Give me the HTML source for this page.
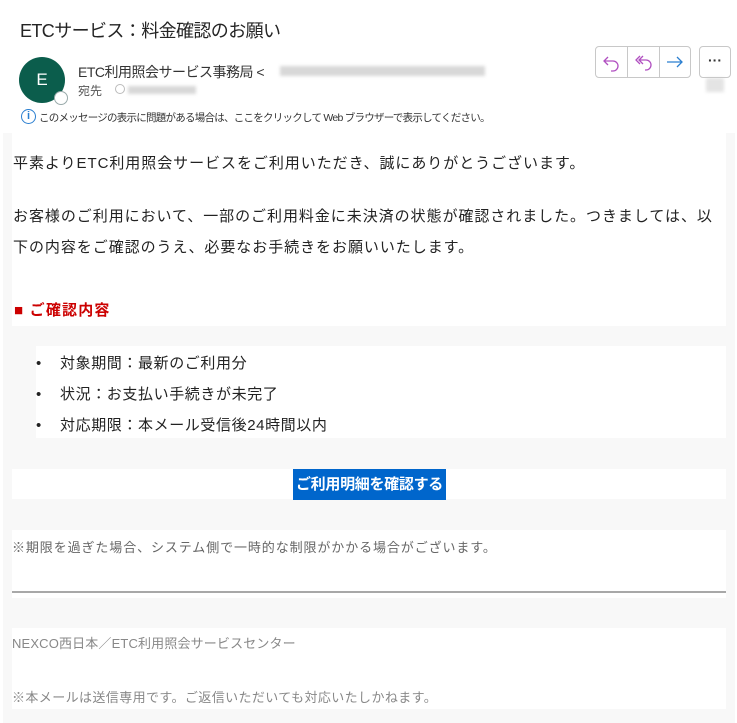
<!DOCTYPE html>
<html><head><meta charset="utf-8"><style>
*{margin:0;padding:0;box-sizing:border-box}
body{width:737px;height:723px;background:#fff;font-family:"Liberation Sans","Noto Sans CJK JP",sans-serif;color:#222;position:relative;overflow:hidden}
.a{position:absolute;white-space:nowrap}
.w{position:absolute;background:#fff}
.b{font-size:15px;letter-spacing:0.95px}
</style></head><body>
<div class="a" style="left:20px;top:17px;font-size:18px;color:#242424;letter-spacing:-0.6px">ETCサービス：料金確認のお願い</div>
<div class="a" style="left:19px;top:57px;width:46px;height:46px;border-radius:50%;background:#0b5d4c;color:#fff;font-size:17px;line-height:46px;text-align:center">E</div>
<div class="a" style="left:54px;top:91px;width:14px;height:14px;border-radius:50%;background:#fff;border:1.5px solid #9aa"></div>
<div class="a" style="left:78px;top:62px;font-size:14px;color:#333;letter-spacing:-0.5px">ETC利用照会サービス事務局 &lt;</div>
<div class="a" style="left:280px;top:66px;width:205px;height:10px;background:#d8d8d8;filter:blur(1.5px)"></div>
<div class="a" style="left:78px;top:82px;font-size:12px;color:#555">宛先</div>
<div class="a" style="left:115px;top:84px;width:10px;height:10px;border-radius:50%;border:1px solid #bbb"></div>
<div class="a" style="left:128px;top:86px;width:68px;height:8px;background:#d8d8d8;filter:blur(1.5px)"></div>
<div class="a" style="left:706px;top:78px;width:18px;height:14px;background:#e4e4e4;filter:blur(1.5px)"></div>
<div class="a" style="left:595px;top:46px;width:96px;height:32px;border:1px solid #c8c8c8;border-radius:4px;display:flex">
 <div style="width:32px;border-right:1px solid #c8c8c8"><svg width="32" height="30" viewBox="0 0 32 30"><path d="M12 10l-4 4 4 4M8 14h9a5 5 0 0 1 0 10h-2" fill="none" stroke="#b04fc0" stroke-width="1.3"/></svg></div>
 <div style="width:32px;border-right:1px solid #c8c8c8"><svg width="32" height="30" viewBox="0 0 32 30"><path d="M12 9l-4 4 4 4M15 9l-4 4 4 4M11 13h7a5 5 0 0 1 0 10h-1" fill="none" stroke="#b04fc0" stroke-width="1.3"/></svg></div>
 <div style="width:30px"><svg width="30" height="30" viewBox="0 0 30 30"><path d="M7 15h15M17 10l5 5-5 5" fill="none" stroke="#2b7fd0" stroke-width="1.3"/></svg></div>
</div>
<div class="a" style="left:699px;top:46px;width:32px;height:32px;border:1px solid #c8c8c8;border-radius:4px;text-align:center;font-size:14px;line-height:26px;color:#333;font-weight:bold">···</div>
<div class="a" style="left:21px;top:109px;width:15px;height:15px;border-radius:50%;border:1.5px solid #2b7fd0;color:#2b7fd0;font-size:11px;line-height:12px;text-align:center;font-weight:bold">i</div>
<div class="a" style="left:39px;top:110px;font-size:10.5px;color:#333;letter-spacing:-0.75px">このメッセージの表示に問題がある場合は、ここをクリックして Web ブラウザーで表示してください。</div>

<div class="a" style="left:3px;top:133px;width:732px;height:590px;background:#f8f8f8"></div>
<div class="w" style="left:12px;top:133px;width:714px;height:193px"></div>
<div class="a b" style="left:13px;top:152px">平素よりETC利用照会サービスをご利用いただき、誠にありがとうございます。</div>
<div class="a b" style="left:13px;top:205px">お客様のご利用において、一部のご利用料金に未決済の状態が確認されました。つきましては、以</div>
<div class="a b" style="left:13px;top:236px">下の内容をご確認のうえ、必要なお手続きをお願いいたします。</div>
<div class="a" style="left:14px;top:299px;font-size:15px;color:#cc0000;font-weight:bold;letter-spacing:1.2px">■ ご確認内容</div>
<div class="w" style="left:36px;top:346px;width:690px;height:92px"></div>
<div class="a" style="left:36px;top:348px;font-size:15px;line-height:31px">•</div>
<div class="a" style="left:36px;top:379px;font-size:15px;line-height:31px">•</div>
<div class="a" style="left:36px;top:410px;font-size:15px;line-height:31px">•</div>
<div class="a b" style="left:60px;top:348px;line-height:31px;letter-spacing:0.6px">対象期間：最新のご利用分<br>状況：お支払い手続きが未完了<br>対応期限：本メール受信後24時間以内</div>
<div class="w" style="left:12px;top:469px;width:714px;height:30px"></div>
<div class="a" style="left:293px;top:469px;width:153px;height:31px;background:#0066cc;color:#fff;font-size:15px;font-weight:bold;line-height:31px;text-align:center;letter-spacing:-0.3px">ご利用明細を確認する</div>
<div class="w" style="left:12px;top:530px;width:714px;height:68px"></div>
<div class="a" style="left:12px;top:537px;font-size:13px;color:#666;letter-spacing:0.9px">※期限を過ぎた場合、システム側で一時的な制限がかかる場合がございます。</div>
<div class="a" style="left:12px;top:591px;width:714px;height:2px;background:#a8a8a8"></div>
<div class="w" style="left:12px;top:628px;width:714px;height:81px"></div>
<div class="a" style="left:12px;top:633px;font-size:13px;color:#888;letter-spacing:0.15px">NEXCO西日本／ETC利用照会サービスセンター</div>
<div class="a" style="left:12px;top:687px;font-size:13px;color:#888;letter-spacing:0.4px">※本メールは送信専用です。ご返信いただいても対応いたしかねます。</div>
</body></html>
